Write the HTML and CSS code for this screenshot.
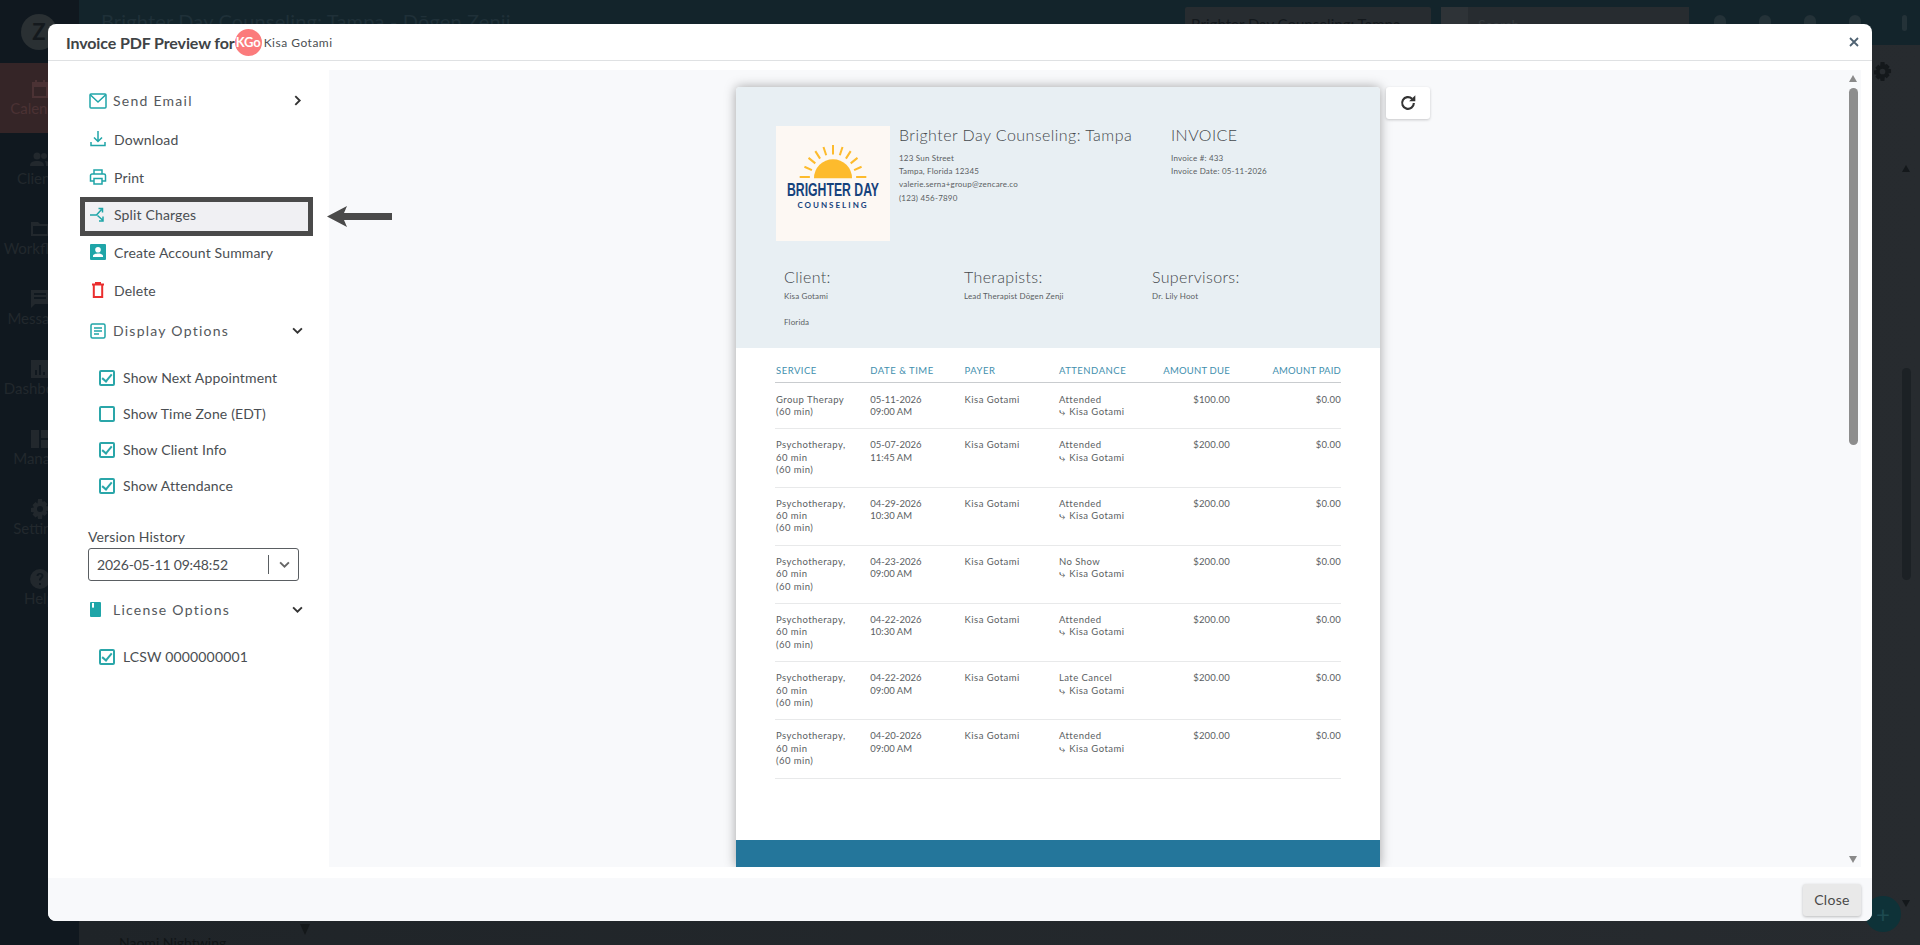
FILE: index.html
```html
<!DOCTYPE html>
<html lang="en">
<head>
    <meta charset="UTF-8">
    <meta name="viewport" content="width=device-width, initial-scale=1.0">
    <title>Invoice PDF Preview</title>
    <link rel="stylesheet" href="styles.css">
</head>
<body>
    <!-- dimmed app behind the modal -->
    <div class="app">
        <nav class="side">
            <div class="side-logo">Z</div>
            <div class="side-item active">
                <svg viewBox="0 0 20 20"><path d="M2 3h3V1h2v2h6V1h2v2h3v16H2zm2 5v9h12V8z"/></svg>
                Calendar
            </div>
            <div class="side-item">
                <svg viewBox="0 0 20 20"><circle cx="7" cy="7" r="3.500"/><circle cx="14" cy="7" r="3"/><path d="M0 17c0-4 3-5 7-5s7 1 7 5zM15 12c3 0 5 1 5 5h-4c0-2-.3-3.500-1-5z"/></svg>
                Clients
            </div>
            <div class="side-item">
                <svg viewBox="0 0 20 20"><path d="M1 3h7l2 2h9v12H1zm2 4v8h14V7z"/></svg>
                Workflows
            </div>
            <div class="side-item">
                <svg viewBox="0 0 20 20"><path d="M1 1h18v14H5l-4 4zm3 3v2h12V4zm0 4v2h12V8z"/></svg>
                Messages
            </div>
            <div class="side-item">
                <svg viewBox="0 0 20 20"><path d="M1 1h18v18H1zm4 10v5h2v-5zm4-5v10h2V6zm4 7v3h2v-3z"/></svg>
                Dashboard
            </div>
            <div class="side-item">
                <svg viewBox="0 0 20 20"><path d="M1 1h8v18H1zM11 1h8v8h-8zM11 11h8v8h-8z"/></svg>
                Manage
            </div>
            <div class="side-item">
                <svg viewBox="0 0 20 20"><path d="M8 0h4l.5 3 2-1 3 3-1.500 2 3 .5v4l-3 .5 1.500 2-3 3-2-1.500L12 20H8l-.5-3-2 1.500-3-3L4 13.500 1 13V9l3-.5L2.500 6l3-3 2 1.500zm2 7a3 3 0 1 0 0 6 3 3 0 0 0 0-6z"/></svg>
                Settings
            </div>
            <div class="side-item">
                <svg viewBox="0 0 20 20"><path fill-rule="evenodd" d="M10 0a10 10 0 1 1 0 20 10 10 0 0 1 0-20zM9 14v2h2v-2zm1-10c-2 0-3.500 1-3.500 3h2c0-1 .5-1.500 1.500-1.500s1.500.5 1.500 1.300c0 1.500-2.500 1.700-2.500 4.700h2c0-2 2.500-2.500 2.500-4.800C13.500 5 12 4 10 4z"/></svg>
                Help
            </div>
        </nav>
        <div class="app-main">
            <header class="topbar">
                <span class="topbar-title">Brighter Day Counseling: Tampa - Dōgen Zenji</span>
                <span class="topbar-select">Brighter Day Counseling: Tampa</span>
                <span class="topbar-glass"></span>
                <span class="topbar-search">Search</span>
                <span class="topbar-icons">
                    <i></i><i></i><i></i><i></i><i class="dots"></i>
                </span>
            </header>
            <div class="app-bottom">
                <div class="bg-list">
                    <svg class="bg-gear" viewBox="0 0 20 20"><path d="M8 0h4l.5 3 2-1 3 3-1.500 2 3 .5v4l-3 .5 1.500 2-3 3-2-1.500L12 20H8l-.5-3-2 1.500-3-3L4 13.500 1 13V9l3-.5L2.500 6l3-3 2 1.500zm2 7a3 3 0 1 0 0 6 3 3 0 0 0 0-6z"/></svg>
                    <span class="bg-field">Full Name</span>
                    <div class="bg-name-row">
                        <span class="bg-name">Naomi Nightwing</span>
                        <span class="bg-caret"></span>
                    </div>
                </div>
                <div class="bg-scroll">
                    <span class="bg-up"></span>
                    <span class="bg-thumb"></span>
                    <span class="bg-down"></span>
                </div>
            </div>
        </div>
        <div class="fab">+</div>
    </div>

    <div class="modal">
        <div class="modal-head">
            <h1>Invoice PDF Preview for</h1>
            <span class="avatar">KGo</span>
            <span class="client-name">Kisa Gotami</span>
            <svg class="modal-x" viewBox="0 0 10 10"><path d="M1 1l8 8M9 1l-8 8"/></svg>
        </div>

        <div class="modal-body">
            <aside class="menu">
                <div class="menu-row spaced">
                    <svg class="ic" viewBox="0 0 18 16"><rect x="1" y="1" width="16" height="14" rx="1"/><path d="M1.500 2l7.500 7 7.500-7"/></svg>
                    <span class="menu-label">Send Email</span>
                    <svg class="chev" viewBox="0 0 10 10"><path d="M3 1l4 4-4 4"/></svg>
                </div>
                <div class="menu-row">
                    <svg class="ic" viewBox="0 0 18 16"><path d="M9 0v10M5 6.500L9 10.500l4-4M2 11v3.500h14V11"/></svg>
                    <span>Download</span>
                </div>
                <div class="menu-row">
                    <svg class="ic" viewBox="0 0 18 16"><path d="M5 5V1h8v4M5 12H1.500V6.500a1.500 1.500 0 0 1 1.500-1.500h12a1.500 1.500 0 0 1 1.500 1.500V12H13"/><rect x="5" y="9.500" width="8" height="5.500"/></svg>
                    <span>Print</span>
                </div>
                <div class="menu-row selected">
                    <svg class="ic" viewBox="0 0 18 16"><path d="M1 8h6.500l5-5.500M9.500 1.500h4V5.500M8.500 8.500l5 4.500M14 9.500v4.500h-4"/></svg>
                    <span>Split Charges</span>
                    <svg class="pointer" viewBox="0 0 65 21"><path d="M0 10.500L20 0l-3 7h48v7H17l3 7z"/></svg>
                </div>
                <div class="menu-row">
                    <svg class="ic" viewBox="0 0 18 16"><path class="solid" d="M2 0h14a1 1 0 0 1 1 1v14a1 1 0 0 1-1 1H2a1 1 0 0 1-1-1V1a1 1 0 0 1 1-1zm7 3a2.800 2.800 0 1 0 0 5.600A2.800 2.800 0 0 0 9 3zm-5 10h10v-1c0-1.800-3.300-2.500-5-2.500S4 10.200 4 12z"/></svg>
                    <span>Create Account Summary</span>
                </div>
                <div class="menu-row">
                    <svg class="ic red" viewBox="0 0 18 16"><path d="M3 2.500h12M6 .8h6M4.800 3v12h8.400V3"/></svg>
                    <span>Delete</span>
                </div>

                <div class="menu-row spaced section">
                    <svg class="ic" viewBox="0 0 18 16"><rect x="2" y="1" width="14" height="14" rx="1.500"/><path d="M5 5h8M5 8h8M5 11h5"/></svg>
                    <span class="menu-label">Display Options</span>
                    <svg class="chev" viewBox="0 0 10 10"><path d="M1 3l4 4 4-4"/></svg>
                </div>
                <div class="check-list">
                    <div class="check on">Show Next Appointment</div>
                    <div class="check">Show Time Zone (EDT)</div>
                    <div class="check on">Show Client Info</div>
                    <div class="check on">Show Attendance</div>
                </div>

                <div class="version">
                    <div class="version-label">Version History</div>
                    <div class="version-select">
                        <span>2026-05-11 09:48:52</span>
                        <svg class="chev small" viewBox="0 0 10 10"><path d="M1 3l4 4 4-4"/></svg>
                    </div>
                </div>

                <div class="menu-row spaced license">
                    <svg class="ic" viewBox="0 0 18 16"><path class="solid" d="M2 0h9a1 1 0 0 1 1 1v13a1 1 0 0 1-1 1H2a1 1 0 0 1-1-1V1a1 1 0 0 1 1-1zm1 1v5l1-.7L5 6V1z"/></svg>
                    <span class="menu-label">License Options</span>
                    <svg class="chev" viewBox="0 0 10 10"><path d="M1 3l4 4 4-4"/></svg>
                </div>
                <div class="check-list">
                    <div class="check on">LCSW 0000000001</div>
                </div>
            </aside>

            <section class="preview">
                <div class="paper-wrap">
                    <article class="paper">
                        <div class="paper-top">
                            <div class="company">
                                <div class="logo">
                                    <svg class="sun" viewBox="0 0 100 50">
                                        <path class="sun-disc" d="M22 49a28 28 0 0 1 56 0z"/>
                                        <path class="sun-rays" d="M50 0v14M36 3l4 12M64 3l-4 12M24 9l7 11M76 9l-7 11M14 19l10 8M86 19l-10 8M8 32l11 5M92 32l-11 5M1 47h15M99 47H84"/>
                                    </svg>
                                    <div class="logo-big">BRIGHTER DAY</div>
                                    <div class="logo-small">COUNSELING</div>
                                </div>
                                <div class="company-info">
                                    <h2>Brighter Day Counseling: Tampa</h2>
                                    <p>123 Sun Street</p>
                                    <p>Tampa, Florida 12345</p>
                                    <p>valerie.serna+group@zencare.co</p>
                                    <p>(123) 456-7890</p>
                                </div>
                                <div class="invoice-info">
                                    <h2>INVOICE</h2>
                                    <p>Invoice #: 433</p>
                                    <p>Invoice Date: 05-11-2026</p>
                                </div>
                            </div>
                            <div class="parties">
                                <div class="party client">
                                    <h3>Client:</h3>
                                    <p>Kisa Gotami</p>
                                    <p class="state">Florida</p>
                                </div>
                                <div class="party therapists">
                                    <h3>Therapists:</h3>
                                    <p>Lead Therapist Dōgen Zenji</p>
                                </div>
                                <div class="party">
                                    <h3>Supervisors:</h3>
                                    <p>Dr. Lily Hoot</p>
                                </div>
                            </div>
                        </div>

                        <table class="lines">
                            <thead>
                                <tr>
                                    <th>SERVICE</th>
                                    <th>DATE &amp; TIME</th>
                                    <th>PAYER</th>
                                    <th>ATTENDANCE</th>
                                    <th class="num">AMOUNT DUE</th>
                                    <th class="num">AMOUNT PAID</th>
                                </tr>
                            </thead>
                            <tbody>
                                <tr class="short">
                                    <td>Group Therapy<br>(60 min)</td>
                                    <td>05-11-2026<br>09:00 AM</td>
                                    <td>Kisa Gotami</td>
                                    <td>Attended<br><span class="arrow">⤷</span> Kisa Gotami</td>
                                    <td class="num">$100.00</td>
                                    <td class="num">$0.00</td>
                                </tr>
                                <tr>
                                    <td>Psychotherapy,<br>60 min<br>(60 min)</td>
                                    <td>05-07-2026<br>11:45 AM</td>
                                    <td>Kisa Gotami</td>
                                    <td>Attended<br><span class="arrow">⤷</span> Kisa Gotami</td>
                                    <td class="num">$200.00</td>
                                    <td class="num">$0.00</td>
                                </tr>
                                <tr>
                                    <td>Psychotherapy,<br>60 min<br>(60 min)</td>
                                    <td>04-29-2026<br>10:30 AM</td>
                                    <td>Kisa Gotami</td>
                                    <td>Attended<br><span class="arrow">⤷</span> Kisa Gotami</td>
                                    <td class="num">$200.00</td>
                                    <td class="num">$0.00</td>
                                </tr>
                                <tr>
                                    <td>Psychotherapy,<br>60 min<br>(60 min)</td>
                                    <td>04-23-2026<br>09:00 AM</td>
                                    <td>Kisa Gotami</td>
                                    <td>No Show<br><span class="arrow">⤷</span> Kisa Gotami</td>
                                    <td class="num">$200.00</td>
                                    <td class="num">$0.00</td>
                                </tr>
                                <tr>
                                    <td>Psychotherapy,<br>60 min<br>(60 min)</td>
                                    <td>04-22-2026<br>10:30 AM</td>
                                    <td>Kisa Gotami</td>
                                    <td>Attended<br><span class="arrow">⤷</span> Kisa Gotami</td>
                                    <td class="num">$200.00</td>
                                    <td class="num">$0.00</td>
                                </tr>
                                <tr>
                                    <td>Psychotherapy,<br>60 min<br>(60 min)</td>
                                    <td>04-22-2026<br>09:00 AM</td>
                                    <td>Kisa Gotami</td>
                                    <td>Late Cancel<br><span class="arrow">⤷</span> Kisa Gotami</td>
                                    <td class="num">$200.00</td>
                                    <td class="num">$0.00</td>
                                </tr>
                                <tr>
                                    <td>Psychotherapy,<br>60 min<br>(60 min)</td>
                                    <td>04-20-2026<br>09:00 AM</td>
                                    <td>Kisa Gotami</td>
                                    <td>Attended<br><span class="arrow">⤷</span> Kisa Gotami</td>
                                    <td class="num">$200.00</td>
                                    <td class="num">$0.00</td>
                                </tr>
                            </tbody>
                        </table>
                        <div class="paper-band"></div>
                    </article>
                    <button class="refresh">
                        <svg viewBox="0 0 16 16"><path d="M13.200 8a5.200 5.200 0 1 1-1.600-3.800"/><path class="solid" d="M14.500 1v5.500H9z"/></svg>
                    </button>
                </div>
                <div class="scrollbar">
                    <span class="sb-up"></span>
                    <span class="sb-thumb"></span>
                    <span class="sb-down"></span>
                </div>
            </section>
        </div>

        <div class="modal-foot">
            <button class="close-btn">Close</button>
        </div>
    </div>
</body>
</html>
```

FILE: styles.css
```css
*, *::before, *::after {
    box-sizing: border-box;
}
html, body {
    margin: 0;
    height: 100%;
    overflow: hidden;
}
body {
    font-family: Lato, "Open Sans", sans-serif;
    color: #4a4e52;
    background-color: #202528;
}

/* app behind the modal */
.app {
    display: flex;
    height: 945px;
}
.side {
    width: 79px;
    background-color: #10181f;
    color: #22282d;
    font-size: 15px;
    flex-shrink: 0;
}
.side-logo {
    width: 36px;
    height: 36px;
    margin: 14px 0 13px 21px;
    border-radius: 50%;
    background-color: #2a3033;
    text-align: center;
    font-size: 22px;
    line-height: 36px;
    font-weight: bold;
    color: #14191d;
}
.side-item {
    height: 70px;
    padding-top: 16px;
    text-align: center;
    line-height: 18px;
    white-space: nowrap;
}
.side-item svg {
    display: block;
    width: 20px;
    height: 20px;
    margin: 0 auto;
    fill: #22282d;
}
.side-item.active {
    background-color: #352527;
    color: #4b3234;
}
.side-item.active svg {
    fill: #4b3234;
}
.app-main {
    flex: 1;
    display: flex;
    flex-direction: column;
}
.topbar {
    height: 45px;
    background-color: #13242b;
    display: flex;
    align-items: flex-start;
    padding: 7px 0 0 22px;
    color: #1f3038;
}
.topbar-title {
    font-size: 20px;
    line-height: 24px;
    margin-top: 2px;
    letter-spacing: 0.15px;
    width: 1084px;
    white-space: nowrap;
}
.topbar-select {
    width: 246px;
    height: 30px;
    padding: 8px 0 0 6px;
    background-color: #272c30;
    border-radius: 2px;
    font-size: 15px;
    color: #14191d;
    white-space: nowrap;
}
.topbar-glass {
    width: 27px;
    height: 30px;
    margin-left: 10px;
    background-color: #2e3337;
}
.topbar-search {
    width: 221px;
    height: 30px;
    padding: 9px 0 0 10px;
    background-color: #272c30;
    font-size: 14px;
    color: #343a3e;
}
.topbar-icons {
    display: flex;
    gap: 33px;
    margin: 8px 0 0 25px;
}
.topbar-icons i {
    width: 12px;
    height: 16px;
    border-radius: 6px;
    background-color: #243238;
}
.topbar-icons .dots {
    width: 5px;
    margin-left: 8px;
}
.app-bottom {
    flex: 1;
    display: flex;
    background-color: #24282c;
    background-image: linear-gradient(to right, #1f2428, #272b2f);
}
.bg-list {
    flex: 1;
    display: flex;
    flex-direction: column;
    padding: 17px 8px 0 40px;
}
.bg-gear {
    align-self: flex-end;
    width: 19px;
    height: 19px;
    fill: #14181b;
    margin-right: 2px;
}
.bg-field {
    margin: auto 0 0 217px;
    font-size: 14px;
    line-height: 16px;
    color: #14181a;
}
.bg-name-row {
    display: flex;
    align-items: flex-start;
    height: 11px;
    margin-top: 11px;
    font-size: 14px;
    color: #111517;
}
.bg-name {
    width: 181px;
    white-space: nowrap;
}
.bg-caret {
    width: 0;
    height: 0;
    margin-top: -10px;
    border-left: 5px solid transparent;
    border-right: 5px solid transparent;
    border-top: 11px solid #14181a;
}
.bg-scroll {
    width: 9px;
    margin: 0 9px 0 0;
    padding-top: 120px;
    display: flex;
    flex-direction: column;
}
.bg-up, .bg-down {
    width: 0;
    height: 0;
    border-left: 4.500px solid transparent;
    border-right: 4.500px solid transparent;
}
.bg-up {
    border-bottom: 7px solid #14181b;
}
.bg-down {
    margin-top: 320px;
    border-top: 7px solid #14181b;
}
.bg-thumb {
    height: 212px;
    margin-top: 196px;
    background-color: #1c2125;
    border-radius: 5px;
}
.fab {
    position: absolute;
    left: 1865px;
    top: 896px;
    width: 36px;
    height: 36px;
    border-radius: 50%;
    background-color: #0e3238;
    color: #1d4a50;
    text-align: center;
    font-size: 24px;
    line-height: 36px;
}

/* modal */
.modal {
    position: absolute;
    left: 48px;
    top: 24px;
    width: 1824px;
    height: 897px;
    background-color: #fff;
    border-radius: 8px;
    overflow: hidden;
    display: flex;
    flex-direction: column;
}
.modal-head {
    height: 37px;
    border-bottom: 1px solid #dfe1e3;
    display: flex;
    align-items: center;
    padding-left: 18px;
}
.modal-head h1 {
    margin: 0;
    font-size: 16px;
    font-weight: bold;
    letter-spacing: -0.12px;
    color: #404346;
}
.avatar {
    width: 27px;
    height: 27px;
    border-radius: 50%;
    background-color: #fb7b7c;
    color: #fff;
    font-size: 13px;
    font-weight: bold;
    letter-spacing: -0.2px;
    line-height: 27px;
    text-align: center;
    flex-shrink: 0;
}
.client-name {
    font-size: 12px;
    letter-spacing: 0.5px;
    margin-left: 2px;
    color: #4b4f52;
}
.modal-x {
    width: 10px;
    height: 10px;
    margin-left: auto;
    margin-right: 13px;
    fill: none;
    stroke: #4f6272;
    stroke-width: 1.800;
}
.modal-body {
    height: 817px;
    display: flex;
}

/* left menu */
.menu {
    position: relative;
    z-index: 1;
    width: 281px;
    padding: 21px 0 0 32px;
    flex-shrink: 0;
    font-size: 14px;
    letter-spacing: 0.15px;
}
.menu-row {
    position: relative;
    display: flex;
    align-items: center;
    width: 233px;
    height: 38px;
    padding-left: 9px;
}
.menu-row.spaced .ic {
    margin-right: 6px;
}
.menu-row.spaced .menu-label {
    margin-top: -2px;
    letter-spacing: 1.250px;
    color: #54585c;
}
.menu-row.section {
    margin-top: 3px;
}
.menu-row.license {
    margin-top: 10px;
}
.menu-row.selected {
    margin: 1px 0 -3px;
    border: 5px solid #4a4a4a;
    background-color: #f0f0f3;
    padding: 0 0 4px 4px;
    height: 39px;
}
.ic {
    width: 18px;
    height: 16px;
    margin-right: 7px;
    flex-shrink: 0;
    fill: none;
    stroke: #1fa5a8;
    stroke-width: 1.500;
}
.ic .solid {
    fill: #1fa5a8;
    stroke: none;
    fill-rule: evenodd;
}
.ic.red {
    stroke: #ea2e2e;
    stroke-width: 2;
}
.chev {
    width: 11px;
    height: 11px;
    position: absolute;
    left: 212px;
    top: 13px;
    fill: none;
    stroke: #333;
    stroke-width: 1.700;
}
.pointer {
    position: absolute;
    left: 242px;
    top: 4px;
    width: 65px;
    height: 21px;
    fill: #4a4a4a;
}

.check-list {
    padding: 10px 0 0 19px;
}
.check {
    position: relative;
    height: 36px;
    line-height: 36px;
    padding-left: 24px;
}
.check::before {
    content: "";
    position: absolute;
    left: 0;
    top: 10px;
    width: 16px;
    height: 16px;
    border: 2px solid #2aa6a9;
    border-radius: 2px;
}
.check.on::after {
    content: "";
    position: absolute;
    left: 5px;
    top: 12px;
    width: 6px;
    height: 10px;
    border: solid #2aa6a9;
    border-width: 0 2px 2px 0;
    transform: rotate(40deg);
}

.version {
    margin: 24px 0 0 8px;
}
.version-label {
    line-height: 18px;
}
.version-select {
    position: relative;
    display: flex;
    align-items: center;
    width: 211px;
    height: 33px;
    margin-top: 2px;
    padding: 0 0 1px 8px;
    border: 1px solid #5a5e62;
    border-radius: 3px;
    letter-spacing: -0.2px;
}
.version-select::after {
    content: "";
    position: absolute;
    left: 179px;
    top: 6px;
    width: 1px;
    height: 19px;
    background-color: #5a5e62;
}
.chev.small {
    left: 190px;
    top: 10px;
    stroke: #666;
}

/* preview pane */
.preview {
    position: relative;
    margin-top: 9px;
    width: 1532px;
    height: 797px;
    background-color: #f8f9fb;
    overflow: hidden;
    display: flex;
}
.paper-wrap {
    position: relative;
    margin: 17px 0 0 407px;
    display: flex;
    align-items: flex-start;
}
.paper {
    width: 644px;
    height: 780px;
    background-color: #fff;
    box-shadow: 0 0 12px rgba(0,0,0,0.35);
    border-radius: 4px 4px 0 0;
    color: #5a5e62;
    position: relative;
}
.paper-top {
    height: 261px;
    background-color: #e8eff3;
    padding: 39px 0 0 40px;
    border-radius: 4px 4px 0 0;
}
.company {
    display: flex;
    align-items: flex-start;
}
.logo {
    width: 114px;
    height: 115px;
    background-color: #fdf8f3;
    padding-top: 19px;
    text-align: center;
    color: #16427c;
    flex-shrink: 0;
}
.sun {
    display: block;
    width: 68px;
    height: 34px;
    margin: 0 auto 1px;
}
.sun-disc {
    fill: #fdbb2d;
}
.sun-rays {
    fill: none;
    stroke: #fdbb2d;
    stroke-width: 3;
}
.logo-big {
    width: 136px;
    margin-left: -11px;
    font-family: "Liberation Sans", sans-serif;
    font-size: 18px;
    line-height: 21px;
    font-weight: bold;
    transform: scaleX(0.68);
    white-space: nowrap;
}
.logo-small {
    margin-top: -1px;
    font-size: 8px;
    line-height: 10px;
    font-weight: bold;
    letter-spacing: 2px;
}
.company-info {
    width: 272px;
    margin-left: 9px;
}
.company-info, .invoice-info {
    margin-top: -1px;
}
.company h2 {
    margin: 0 0 6.500px;
    font-size: 16px;
    line-height: 20px;
    font-weight: 300;
    letter-spacing: 0.45px;
    color: #44484c;
}
.company p {
    margin: 0;
    font-size: 8px;
    line-height: 13.400px;
    letter-spacing: 0.2px;
}
.parties {
    display: flex;
    margin: 26px 0 0 8px;
}
.party {
    width: 188px;
}
.party.client {
    width: 180px;
}
.party h3 {
    margin: 0;
    font-size: 16px;
    line-height: 20px;
    font-weight: 300;
    letter-spacing: 0.35px;
    color: #44484c;
}
.party p {
    margin: 3px 0 0;
    font-size: 8px;
    line-height: 12px;
    letter-spacing: 0.15px;
}
.party .state {
    margin-top: 14px;
}

/* invoice table */
.lines {
    width: 566px;
    margin: 17px 0 0 39px;
    border-collapse: collapse;
    table-layout: fixed;
    font-size: 9.500px;
    line-height: 12.400px;
    letter-spacing: 0.45px;
}
.lines th {
    padding: 0 0 5px 1px;
    font-weight: normal;
    text-align: left;
    color: #3f8fae;
    border-bottom: 1.500px solid #c9cccf;
    letter-spacing: 0.5px;
}
.lines th:nth-child(-n+3) {
    width: 94.300px;
}
.lines th:nth-child(4) {
    width: 81px;
}
.lines th:nth-child(5) {
    width: 91px;
}
.lines td {
    height: 58.200px;
    padding: 10px 0 0 1px;
    vertical-align: top;
    border-bottom: 1.500px solid #e8e9ea;
}
.lines .short td {
    height: 46px;
    padding-top: 10.500px;
}
.lines td:nth-child(2) {
    letter-spacing: 0;
}
.lines th.num, .lines td.num {
    text-align: right;
    padding-left: 0;
    letter-spacing: 0.2px;
}
.arrow {
    font-family: "DejaVu Sans", sans-serif;
    font-size: 9.500px;
    margin-right: 1px;
}
.paper-band {
    position: absolute;
    left: 0;
    bottom: 0;
    width: 100%;
    height: 27px;
    background-color: #24769b;
}
.refresh {
    position: absolute;
    left: 650px;
    top: 0;
    width: 44px;
    height: 32px;
    padding: 0;
    border: none;
    border-radius: 3px;
    background-color: #fff;
    box-shadow: 0 1px 3px rgba(0,0,0,0.2);
}
.refresh svg {
    width: 18px;
    height: 18px;
    fill: none;
    stroke: #333;
    stroke-width: 1.900;
    vertical-align: middle;
}
.refresh .solid {
    fill: #333;
    stroke: none;
}

/* scrollbar */
.scrollbar {
    position: absolute;
    right: 3px;
    top: 5px;
    width: 9px;
    height: 788px;
}
.sb-up, .sb-down {
    position: absolute;
    left: 0;
    width: 0;
    height: 0;
    border-left: 4.500px solid transparent;
    border-right: 4.500px solid transparent;
}
.sb-up {
    top: 0;
    border-bottom: 7px solid #8a8a8a;
}
.sb-down {
    bottom: 0;
    border-top: 7px solid #8a8a8a;
}
.sb-thumb {
    position: absolute;
    top: 13px;
    left: 0;
    width: 9px;
    height: 357px;
    background-color: #8d8d8d;
    border-radius: 5px;
}

/* footer */
.modal-foot {
    height: 43px;
    background-color: #f8f9fb;
    display: flex;
    justify-content: flex-end;
    align-items: center;
    padding-right: 11px;
}
.close-btn {
    width: 58px;
    height: 32px;
    border: none;
    border-radius: 3px;
    background-color: #e9e9e9;
    box-shadow: 0 1px 3px rgba(0,0,0,0.25);
    font-family: Lato, sans-serif;
    font-size: 14px;
    letter-spacing: 0.3px;
    color: #4a4a4a;
}
```
